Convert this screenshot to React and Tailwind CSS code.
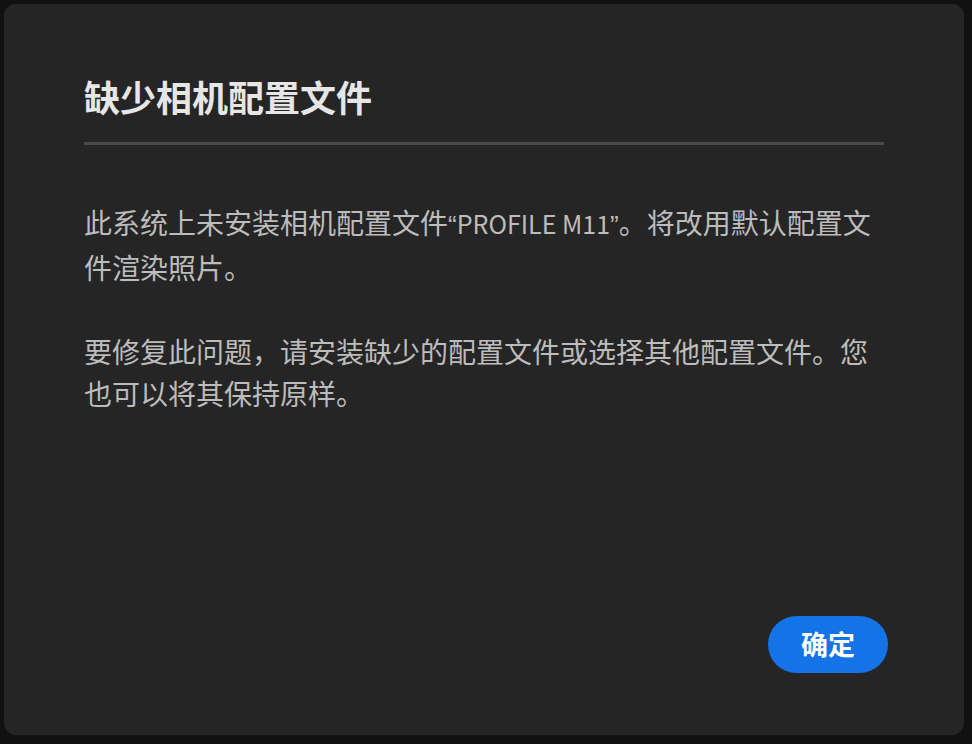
export default function App() {
  const font = { fontFamily: '"Noto Sans CJK SC", "Noto Sans", sans-serif' };
  const quote = { fontFamily: '"Liberation Sans", sans-serif' };

  return (
    <div className="w-[972px] h-[744px] bg-[#111111] p-[4px] overflow-hidden" style={font}>
      <div className="w-[960px] h-[731px] bg-[#252525] rounded-[12px] flex flex-col px-[80px] pt-[70px] pb-[62px]">
        <h1 className="text-[36px] leading-[44px] font-bold text-[#e6e6e6]">缺少相机配置文件</h1>
        <div className="mt-[24px] h-[3px] bg-[#4a4a4a]" />

        <div className="mt-[56px] text-[28px] leading-[42px] text-[#bcbcbc]">
          <p>
            此系统上未安装相机配置文件<span style={quote} className="text-[26px]">“</span>
            <span className="text-[25px]">PROFILE M11</span>
            <span style={quote} className="text-[26px]">”</span>。将改用默认配置文件渲染照片。
          </p>
          <p className="mt-[42px]">要修复此问题，请安装缺少的配置文件或选择其他配置文件。您也可以将其保持原样。</p>
        </div>

        <div className="mt-auto flex justify-end -mr-[4px]">
          <button className="h-[57px] w-[120px] rounded-full bg-[#1473e6] text-white text-[27px] font-bold">
            确定
          </button>
        </div>
      </div>
    </div>
  );
}
